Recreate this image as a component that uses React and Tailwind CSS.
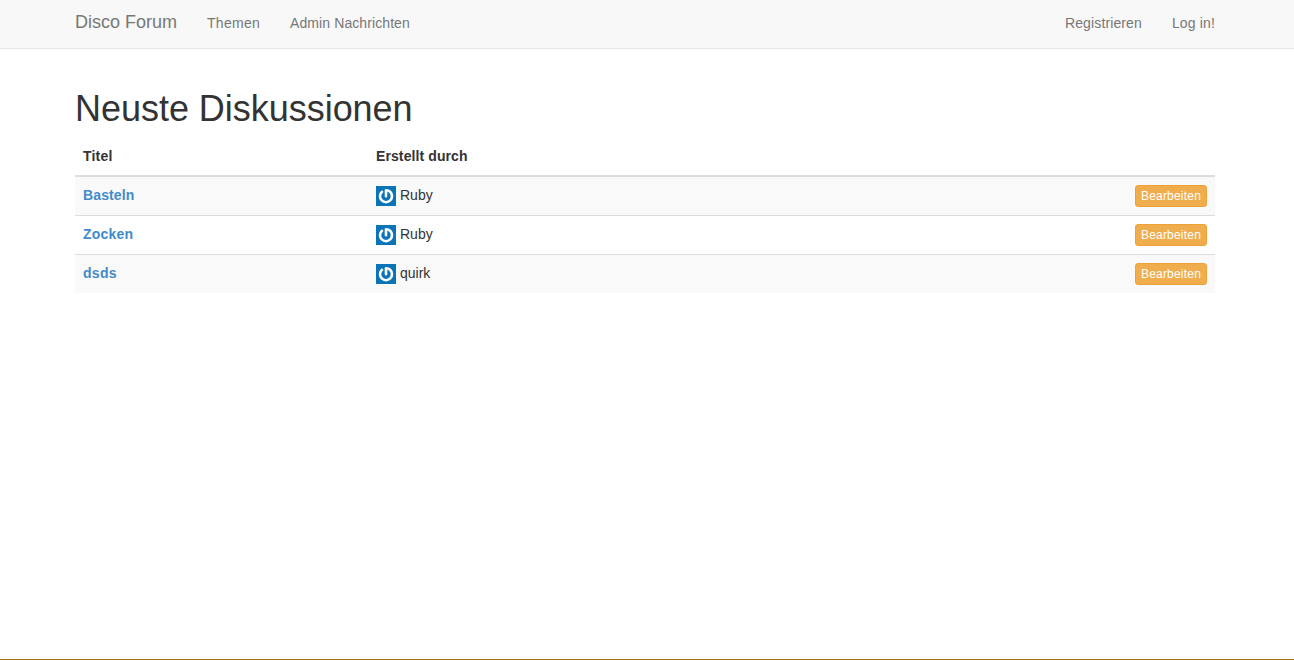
const rows = [
  { title: "Basteln", author: "Ruby", spacing: "tracking-[0.12px]" },
  { title: "Zocken", author: "Ruby", spacing: "tracking-[0.2px]" },
  { title: "dsds", author: "quirk", spacing: "tracking-[0.3px]" },
];

function Avatar() {
  return (
    <svg className="mt-px block size-5 shrink-0" viewBox="0 0 20 20" fill="none">
      <rect width="20" height="20" fill="#0a74b8" />
      <path
        d="M10 10.2V4.3C13.6 4.3 16 6.9 16 10.2A6 6 0 0 1 4 10.2C4 8.4 4.8 6.9 6 5.8"
        stroke="#fff"
        strokeWidth="2.6"
        strokeLinecap="round"
        strokeLinejoin="round"
      />
    </svg>
  );
}

export default function App() {
  return (
    <div className="flex h-[660px] flex-col border-b border-[#a96d12] bg-white font-['Liberation_Sans',Arial,sans-serif] text-sm leading-5 text-[#333]">
      <nav className="h-[49px] shrink-0 border-b border-[#e7e7e7] bg-[#f8f8f8] text-[#777]">
        <div className="ml-[75px] flex w-[1140px] items-start pt-[13px]">
          <a className="-mt-px mr-[30px] text-lg leading-5">Disco Forum</a>
          <a className="mr-[30px] tracking-[0.28px]">Themen</a>
          <a className="tracking-[0.09px]">Admin Nachrichten</a>
          <a className="mr-[30px] ml-auto tracking-[0.12px]">Registrieren</a>
          <a className="tracking-[0.15px]">Log in!</a>
        </div>
      </nav>
      <main className="ml-[75px] w-[1140px] pt-10">
        <h1 className="mb-[11px] text-[36px] leading-[39px] font-medium tracking-[-0.03px]">Neuste Diskussionen</h1>
        <table className="w-full table-fixed border-separate border-spacing-0 text-left">
          <thead>
            <tr>
              <th className="w-[293px] border-b-2 border-[#ddd] px-2 pt-[7px] pb-[9px] font-bold tracking-[0.2px]">Titel</th>
              <th className="border-b-2 border-[#ddd] px-2 pt-[7px] pb-[9px] font-bold tracking-[0.1px]">Erstellt durch</th>
              <th className="w-[100px] border-b-2 border-[#ddd]" />
            </tr>
          </thead>
          <tbody className="[&>tr:not(:first-child)>td]:border-t [&>tr:not(:first-child)>td]:border-[#ddd]">
            {rows.map((row) => (
              <tr key={row.title} className="h-[39px] odd:bg-[#f9f9f9] first:h-[38px]">
                <td className={`px-2 pt-2 align-top font-bold text-[#428bca] ${row.spacing}`}>{row.title}</td>
                <td className="px-2 pt-2 align-top">
                  <div className="flex gap-1">
                    <Avatar />
                    <span>{row.author}</span>
                  </div>
                </td>
                <td className="px-2 pt-2 align-top">
                  <button className="ml-auto block h-[22px] w-[72px] rounded-[3px] border border-[#eea236] bg-[#f0ad4e] text-center text-xs leading-[18px] tracking-[0.2px] text-white">
                    Bearbeiten
                  </button>
                </td>
              </tr>
            ))}
          </tbody>
        </table>
      </main>
    </div>
  );
}
